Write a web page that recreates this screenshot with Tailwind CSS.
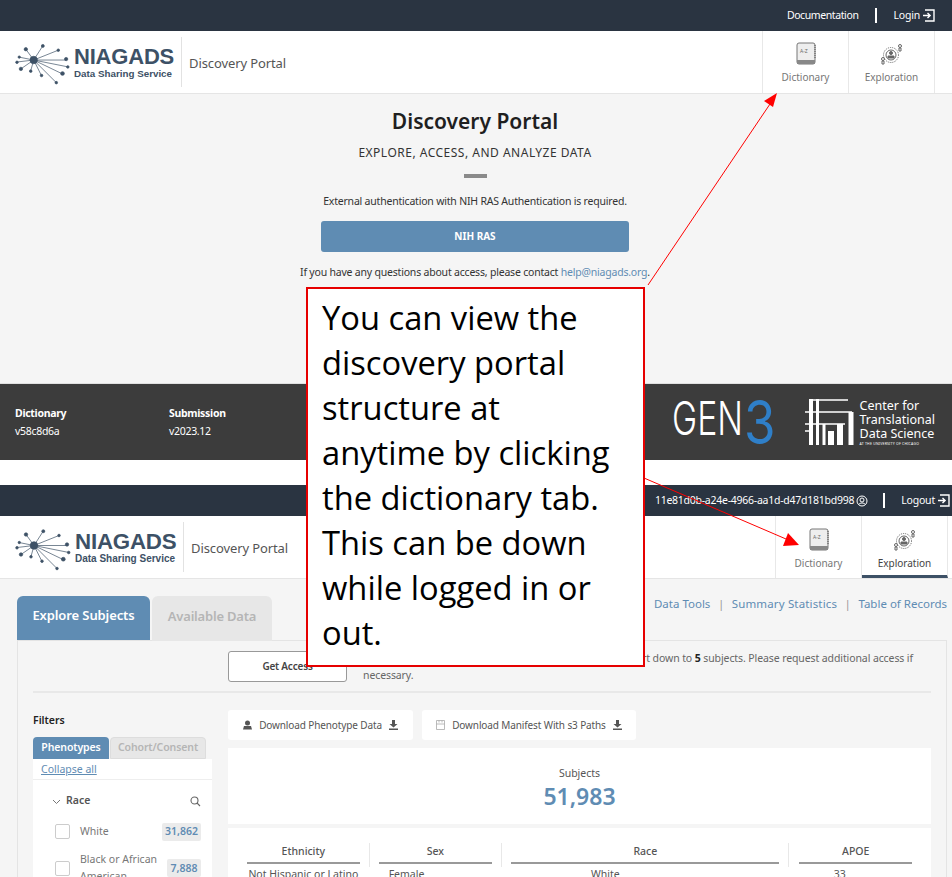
<!DOCTYPE html>
<html><head><meta charset="utf-8"><script src="https://cdn.jsdelivr.net/npm/@tailwindcss/browser@4"></script></head>
<body class="m-0 bg-white font-['Noto_Sans',sans-serif]">
<div class="relative w-[952px] h-[877px] overflow-hidden bg-white text-[#4a4a4a]">

<!-- first screenshot -->
<section class="h-[460px] flex flex-col">
  <div class="h-[31px] bg-[#2a3441] flex items-center justify-end text-[10.5px] tracking-[-.2px] text-white pr-[17px]">
    <span class="tracking-[-.4px]">Documentation</span><span class="w-[2px] h-[15px] bg-white ml-[17px] mr-[16px]"></span><span>Login</span>
    <svg class="ml-[2px]" width="13" height="13" viewBox="0 0 13 13" fill="none" stroke="white" stroke-width="1.400"><path d="M3 1h9v11H3M1 6.500h7M5.500 4l2.600 2.500L5.500 9"/></svg>
  </div>
  <div class="h-[63px] bg-white border-b border-[#e5e5e5] flex items-center pl-[15px]">
    <svg width="59" height="46" viewBox="14 36 60 46" stroke="#3d5166" stroke-width=".7" fill="#3d5166"><path d="M33 57L42 43M33 57L58 47M33 57H66M33 57L68 64M33 57L62 71M33 57L56 80M33 57L41 73M33 57L30 68M33 57L20 66M33 57L16 59M33 57L18 54M33 57L25 46"/><circle cx="33" cy="57" r="3.800"/><circle cx="42.300" cy="42.700" r="1.500"/><circle cx="58" cy="47" r="1.300"/><circle cx="66" cy="56" r="1.700"/><circle cx="67.700" cy="64" r="1.300"/><circle cx="62.300" cy="70.700" r="1.900"/><circle cx="56" cy="80" r="1.300"/><circle cx="41" cy="72.700" r="1.300"/><circle cx="30" cy="68.300" r="1.300"/><circle cx="20" cy="66" r="1.700"/><circle cx="16" cy="59.300" r="1.300"/><circle cx="18.300" cy="54" r="1.200"/><circle cx="25" cy="46" r="1.700"/></svg>
    <div class="w-[100px] text-[#3d5166] font-['Liberation_Sans',sans-serif] font-bold">
      <div class="text-[22px] leading-[22px] tracking-[-.2px]">NIAGADS</div>
      <div class="text-[9.800px] leading-[11px] whitespace-nowrap">Data Sharing Service</div>
    </div>
    <span class="w-px h-[50px] bg-[#e2e2e2] ml-[7px] mr-[7px]"></span>
    <span class="text-[13px] tracking-[-.1px] text-[#555] pt-[3px]">Discovery Portal</span>
    <div class="ml-auto flex h-full mr-[17px] text-[10px] text-[#777]">
      <div class="w-[87px] border-x border-[#e8e8e8] flex flex-col items-center pt-[11px]">
        <svg width="22" height="24" viewBox="0 0 22 24"><rect x="2" y="1" width="18" height="21" rx="2" fill="#eee" stroke="#777"/><rect x="2" y="18" width="18" height="4" fill="#888"/><path d="M20 3v14" stroke="#555" stroke-dasharray="1 1"/><text x="5" y="11" font-size="5" fill="#666">A-Z</text></svg>
        <span class="mt-[4px]">Dictionary</span>
      </div>
      <div class="w-[86px] border-r border-[#e8e8e8] flex flex-col items-center pt-[11px]">
        <svg width="24" height="24" viewBox="0 0 24 24" fill="none" stroke="#666"><circle cx="11" cy="13" r="7.500" stroke-dasharray="1 1"/><circle cx="11" cy="13" r="5"/><circle cx="11" cy="11" r="1.500" fill="#666"/><path d="M8 16h6v-2H8z" fill="#666"/><circle cx="20" cy="4" r="1.500"/><path d="M19 6h2v3h-2z"/><circle cx="3" cy="17" r="1.500"/><path d="M2 19h2v3H2z"/></svg>
        <span class="mt-[4px]">Exploration</span>
      </div>
    </div>
  </div>
  <main class="h-[290px] bg-[#f5f5f5] border-b border-[#e0e0e0] flex flex-col items-center pr-[2px] text-[#333]">
    <h1 class="mt-[10px] text-[21px] leading-[34px] font-semibold text-[#1f1f1f]">Discovery Portal</h1>
    <p class="mt-[6px] text-[12px] leading-[18px] tracking-[.5px]">EXPLORE, ACCESS, AND ANALYZE DATA</p>
    <div class="mt-[12px] w-[23px] h-[4px] bg-[#8a8a8a]"></div>
    <p class="mt-[15px] text-[10.500px] tracking-[-.2px] leading-[16px]">External authentication with NIH RAS Authentication is required.</p>
    <div class="mt-[12px] w-[308px] h-[31px] rounded-[3px] bg-[#5f8cb3] text-white font-bold text-[10px] flex items-center justify-center">NIH RAS</div>
    <p class="mt-[12px] text-[10.500px] tracking-[-.2px] leading-[16px]">If you have any questions about access, please contact <span class="text-[#5f8cb3]">help@niagads.org</span>.</p>
  </main>
  <footer class="h-[76px] bg-[#3c3c3c] text-white flex relative text-[10.500px] tracking-[-.3px]">
    <div class="w-[169px] pl-[15px] pt-[20px] leading-[18px]"><b>Dictionary</b><br>v58c8d6a</div>
    <div class="w-[200px] pt-[20px] leading-[18px]"><b>Submission</b><br>v2023.12</div>
    <div class="ml-auto flex items-center mr-[17px] gap-[31px] tracking-normal">
      <div class="flex items-start h-[50px] w-[102px] relative font-['Inter',sans-serif]">
        <span class="font-light text-[47px] leading-[50px] scale-x-[.72] origin-left -mt-[4px]">GEN</span>
        <span class="absolute left-[72px] top-[-7px] text-[#2f7fc8] text-[60px] leading-[64px] font-normal scale-x-[.85] origin-left">3</span>
      </div>
      <div class="flex items-center gap-[6px]">
        <svg width="49" height="46" viewBox="0 0 49 46" stroke="white" fill="none"><path d="M6 0v46" stroke-width="4"/><path d="M12.500 0v46" stroke-width="3"/><path d="M4 1h39M0 13h47M0 25h40M0 32h5" stroke-width="1.600"/><path d="M46 13v33" stroke-width="5"/><path d="M35 25v21" stroke-width="6"/><path d="M26 32v14" stroke-width="6"/><path d="M19 25v21" stroke-width="3"/></svg>
        <div class="text-[12.500px] leading-[14px] text-white">Center for<br>Translational<br>Data Science<div class="text-[3.500px] leading-[5px] tracking-[.2px] whitespace-nowrap">AT THE UNIVERSITY OF CHICAGO</div></div>
      </div>
    </div>
  </footer>
</section>

<div class="h-[25px] bg-white"></div>

<!-- second screenshot -->
<section>
  <div class="h-[31px] bg-[#2a3441] flex items-center justify-end text-[10.500px] tracking-[-.2px] text-white pr-[2px]">
    <span class="tracking-[-.25px]">11e81d0b-a24e-4966-aa1d-d47d181bd998</span>
    <svg class="ml-[2px]" width="12" height="12" viewBox="0 0 12 12" fill="none" stroke="white"><circle cx="6" cy="6" r="5"/><circle cx="6" cy="5" r="2"/><path d="M2.500 9.500c2-2 5-2 7 0"/></svg>
    <span class="w-[2px] h-[15px] bg-white ml-[15px] mr-[16px]"></span><span>Logout</span>
    <svg class="ml-[2px]" width="13" height="13" viewBox="0 0 13 13" fill="none" stroke="white" stroke-width="1.400"><path d="M3 1h9v11H3M1 6.500h7M5.500 4l2.600 2.500L5.500 9"/></svg>
  </div>
  <div class="h-[63px] bg-white border-b border-[#e5e5e5] flex items-center pl-[15px]">
    <svg width="60" height="47" viewBox="14 36 60 46" stroke="#3d5166" stroke-width=".7" fill="#3d5166"><path d="M33 57L42 43M33 57L58 47M33 57H66M33 57L68 64M33 57L62 71M33 57L56 80M33 57L41 73M33 57L30 68M33 57L20 66M33 57L16 59M33 57L18 54M33 57L25 46"/><circle cx="33" cy="57" r="3.800"/><circle cx="42.300" cy="42.700" r="1.500"/><circle cx="58" cy="47" r="1.300"/><circle cx="66" cy="56" r="1.700"/><circle cx="67.700" cy="64" r="1.300"/><circle cx="62.300" cy="70.700" r="1.900"/><circle cx="56" cy="80" r="1.300"/><circle cx="41" cy="72.700" r="1.300"/><circle cx="30" cy="68.300" r="1.300"/><circle cx="20" cy="66" r="1.700"/><circle cx="16" cy="59.300" r="1.300"/><circle cx="18.300" cy="54" r="1.200"/><circle cx="25" cy="46" r="1.700"/></svg>
    <div class="w-[101px] text-[#3d5166] font-['Liberation_Sans',sans-serif] font-bold">
      <div class="text-[22.300px] leading-[22px] tracking-[-.2px]">NIAGADS</div>
      <div class="text-[10px] leading-[11px] whitespace-nowrap">Data Sharing Service</div>
    </div>
    <span class="w-px h-[50px] bg-[#e2e2e2] ml-[7px] mr-[7px]"></span>
    <span class="text-[13px] tracking-[-.1px] text-[#555] pt-[3px]">Discovery Portal</span>
    <div class="ml-auto flex h-full mr-[4px] text-[10px] text-[#777]">
      <div class="w-[87px] border-x border-[#e8e8e8] flex flex-col items-center pt-[12px]">
        <svg width="22" height="24" viewBox="0 0 22 24"><rect x="2" y="1" width="18" height="21" rx="2" fill="#eee" stroke="#777"/><rect x="2" y="18" width="18" height="4" fill="#888"/><path d="M20 3v14" stroke="#555" stroke-dasharray="1 1"/><text x="5" y="11" font-size="5" fill="#666">A-Z</text></svg>
        <span class="mt-[4px]">Dictionary</span>
      </div>
      <div class="w-[86px] border-r border-[#e8e8e8] border-b-[3px] border-b-[#3d5166] flex flex-col items-center pt-[12px] text-[#444]">
        <svg width="24" height="24" viewBox="0 0 24 24" fill="none" stroke="#666"><circle cx="11" cy="13" r="7.500" stroke-dasharray="1 1"/><circle cx="11" cy="13" r="5"/><circle cx="11" cy="11" r="1.500" fill="#666"/><path d="M8 16h6v-2H8z" fill="#666"/><circle cx="20" cy="4" r="1.500"/><path d="M19 6h2v3h-2z"/><circle cx="3" cy="17" r="1.500"/><path d="M2 19h2v3H2z"/></svg>
        <span class="mt-[4px]">Exploration</span>
      </div>
    </div>
  </div>
  <div class="bg-[#f5f5f5] h-[298px] pl-[17px] pr-[5px] pt-[17px]">
    <div class="flex items-start h-[44px]">
      <div class="w-[133px] h-[44px] pb-[4px] rounded-t-[6px] bg-[#5f8cb3] text-white font-semibold text-[13px] tracking-[-.1px] flex items-center justify-center">Explore Subjects</div>
      <div class="w-[120px] h-[45px] pb-[4px] ml-[2px] rounded-t-[6px] bg-[#e7e7e7] text-[#b5b5b5] font-semibold text-[13px] tracking-[-.2px] flex items-center justify-center">Available Data</div>
      <div class="ml-auto flex text-[11.500px] text-[#5f8cb3] items-center h-[16px] whitespace-nowrap"><span>Data Tools</span><span class="text-[#999] mx-[7.500px]">|</span><span class="tracking-[.15px]">Summary Statistics</span><span class="text-[#999] mx-[7.500px]">|</span><span>Table of Records</span></div>
    </div>
    <div class="border border-[#e4e4e4] h-[240px] px-[15px]">
      <div class="h-[52px] border-b-2 border-[#e8e8e8] flex pl-[195px] pt-[10px]">
        <div class="w-[119px] h-[31px] bg-white border border-[#999] rounded-[3px] text-[10px] tracking-[-.2px] font-semibold text-[#444] flex items-center justify-center">Get Access</div>
        <div class="ml-[16px] text-[10.500px] tracking-[-.1px] leading-[17px] text-[#666] w-[556px] -mt-[1px]">
          <div class="text-right pr-[6px] whitespace-nowrap">You have limited access and can view the cohort down to <b class="text-[#222]">5</b> subjects. Please request additional access if</div>
          <div>necessary.</div>
        </div>
      </div>
      <div class="flex">
        <aside class="w-[179px] shrink-0 pt-[19px]">
          <div class="text-[10.500px] font-semibold text-[#222] leading-[16px]">Filters</div>
          <div class="flex mt-[9px] h-[22px] text-[10.500px] tracking-[-.1px] font-semibold">
            <div class="w-[76px] rounded-t-[4px] bg-[#5f8cb3] text-white flex items-center justify-center">Phenotypes</div>
            <div class="w-[96px] ml-px rounded-t-[4px] bg-[#e7e7e7] border border-[#ddd] text-[#b5b5b5] flex items-center justify-center">Cohort/Consent</div>
          </div>
          <div class="bg-white h-[200px]">
            <div class="h-[21px] border-b border-[#eee] pl-[8px] text-[10.500px] text-[#5f8cb3] underline leading-[20px]">Collapse all</div>
            <div class="relative pl-[19px] pt-[12px]">
              <div class="flex items-center text-[10.500px] font-semibold text-[#555] h-[18px]"><svg width="9" height="9" viewBox="0 0 9 9" fill="none" stroke="#777" class="mr-[5px]"><path d="M1 3l3.500 3.500L8 3"/></svg>Race<svg class="ml-auto mr-[11px]" width="11" height="11" viewBox="0 0 11 11" fill="none" stroke="#666" stroke-width="1.100"><circle cx="4.500" cy="4.500" r="3.500"/><path d="M7 7l3 3"/></svg></div>
              <div class="flex items-center mt-[12px] h-[19px] pl-[3px] pr-[11px] text-[10.500px] text-[#777]"><span class="w-[15px] h-[15px] border border-[#ccc] rounded-[2px] mr-[10px]"></span>White<span class="ml-auto w-[39px] h-[18px] bg-[#ebebeb] rounded-[2px] text-[#5f8cb3] font-semibold flex items-center justify-center">31,862</span></div>
              <div class="flex items-center mt-[10px] pl-[3px] pr-[11px] text-[10.500px] leading-[17px] text-[#777]"><span class="w-[15px] h-[15px] border border-[#ccc] rounded-[2px] mr-[10px]"></span>Black or African<br>American<span class="ml-auto w-[34px] h-[18px] bg-[#ebebeb] rounded-[2px] text-[#5f8cb3] font-semibold flex items-center justify-center">7,888</span></div>
            </div>
          </div>
        </aside>
        <div class="ml-[16px] w-[703px] pt-[17px]">
          <div class="flex gap-[9px] h-[30px] text-[10px] text-[#555] tracking-[-.12px]">
            <div class="w-[185px] bg-white rounded-[3px] flex items-center justify-center gap-[7px]">
              <svg width="9" height="10" viewBox="0 0 9 10" fill="#555"><circle cx="4.500" cy="3" r="2.500"/><path d="M1 6h7l1 3.500H0z"/></svg>Download Phenotype Data
              <svg width="9" height="10" viewBox="0 0 9 10" fill="#555"><path d="M3 0h3v4h2.500L4.500 7.500.5 4H3zM0 8.500h9V10H0z"/></svg></div>
            <div class="w-[214px] bg-white rounded-[3px] flex items-center justify-center gap-[7px]">
              <svg width="9" height="10" viewBox="0 0 9 10" fill="none" stroke="#aaa" stroke-width=".8"><path d="M.5.500h8v9h-8zM.5 4h8M3 .5v2M6 .5v2"/></svg>Download Manifest With s3 Paths
              <svg width="9" height="10" viewBox="0 0 9 10" fill="#555"><path d="M3 0h3v4h2.500L4.500 7.500.5 4H3zM0 8.500h9V10H0z"/></svg></div>
          </div>
          <div class="mt-[8px] h-[76px] bg-white flex flex-col items-center pt-[17px]">
            <div class="text-[10.500px] leading-[16px] text-[#555]">Subjects</div>
            <div class="text-[23px] leading-[30px] font-semibold text-[#5f8cb3]">51,983</div>
          </div>
          <div class="mt-[4px] h-[80px] bg-white flex px-[19px] pt-[15px] text-[10.500px] text-[#555] text-center">
            <div class="w-[113px] mr-[9px] font-medium"><div class="h-[21px] border-b-2 border-[#999] leading-[17px]">Ethnicity</div><div class="font-normal whitespace-nowrap mt-[3px]">Not Hispanic or Latino</div></div>
            <div class="w-px h-[24px] bg-[#e8e8e8]"></div>
            <div class="w-[114px] mx-[9px] font-medium"><div class="h-[21px] border-b-2 border-[#999] leading-[17px]">Sex</div><div class="font-normal mt-[3px] text-left pl-[10px]">Female</div></div>
            <div class="w-px h-[24px] bg-[#e8e8e8]"></div>
            <div class="w-[269px] mx-[9px] font-medium"><div class="h-[21px] border-b-2 border-[#999] leading-[17px]">Race</div><div class="font-normal mt-[3px] pr-[80px]">White</div></div>
            <div class="w-px h-[24px] bg-[#e8e8e8]"></div>
            <div class="w-[113px] ml-[10px] font-medium"><div class="h-[21px] border-b-2 border-[#999] leading-[17px]">APOE</div><div class="font-normal mt-[3px] pr-[32px]">33</div></div>
          </div>
        </div>
      </div>
    </div>
  </div>
</section>

<!-- annotation overlay -->
<svg class="absolute left-0 top-0 pointer-events-none" width="952" height="877" fill="#f00" stroke="none">
  <path d="M648 285L770 104" stroke="#f00" stroke-width="1" fill="none"/><path d="M777 93L773 107L764 101z"/>
  <path d="M644 478L786 539" stroke="#f00" stroke-width="1" fill="none"/><path d="M799 545L783 546L788 533z"/>
</svg>
<div class="absolute left-[306px] top-[287px] w-[339px] h-[380px] bg-white border-2 border-[#e60000] pl-[14px] pr-[20px] pt-[6px] text-[32.700px] leading-[45px] text-black font-['Open_Sans',sans-serif]">You can view the discovery portal structure at anytime by clicking the dictionary tab. This can be down while logged in or out.</div>
</div>
</body></html>
